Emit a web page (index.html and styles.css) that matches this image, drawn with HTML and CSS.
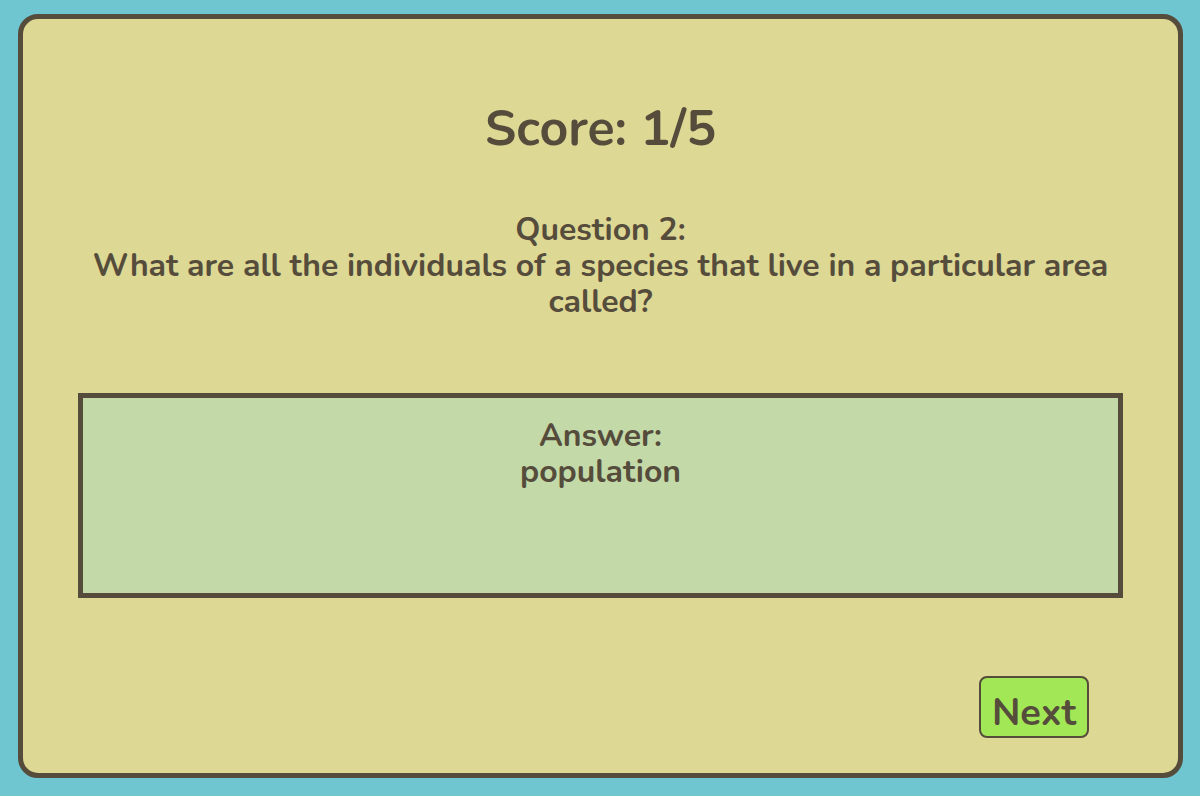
FILE: index.html
```html
<!DOCTYPE html>
<html>
<head>
<meta charset="utf-8">
<link rel="stylesheet" href="styles.css">
</head>
<body>
<div class="card">
  <h1 class="score">Score: 1/5</h1>
  <div class="question">Question 2:<br>What are all the individuals of a species that live in a particular area called?</div>
  <div class="answer">Answer:<br>population</div>
  <div class="actions"><button class="next">Next</button></div>
</div>
</body>
</html>
```
FILE: styles.css
```css
html, body {
  margin: 0;
  height: 100%;
}
body {
  background: #6fc5d0;
  padding: 14px 17px 18px 18px;
  box-sizing: border-box;
  font-family: "Nunito", "Lato", "Open Sans", sans-serif;
  color: #554c3c;
}
.card {
  height: 100%;
  box-sizing: border-box;
  background: #ddd894;
  border: 5px solid #554c3c;
  border-radius: 20px;
  display: flex;
  flex-direction: column;
  align-items: stretch;
  padding: 0 55px;
}
.score {
  margin: 80px 0 0;
  font-size: 50px;
  font-weight: 700;
  text-align: center;
  line-height: 60px;
}
.question {
  margin-top: 53px;
  font-size: 32px;
  font-weight: 700;
  text-align: center;
  line-height: 36px;
}
.answer {
  margin-top: 73px;
  height: 205px;
  box-sizing: border-box;
  background: #c3d9a8;
  border: 5px solid #554c3c;
  padding-top: 20px;
  font-size: 32px;
  font-weight: 700;
  text-align: center;
  line-height: 36px;
}
.actions {
  display: flex;
  justify-content: flex-end;
  margin-top: 78px;
  padding-right: 34px;
}
.next {
  display: block;
  box-sizing: border-box;
  width: 110px;
  height: 62px;
  background: #a2e755;
  border: 2px solid #554c3c;
  border-radius: 8px;
  font-family: inherit;
  font-size: 38px;
  font-weight: 700;
  color: #554c3c;
  padding: 11px 0 0;
  line-height: 45px;
  text-align: center;
}
```
